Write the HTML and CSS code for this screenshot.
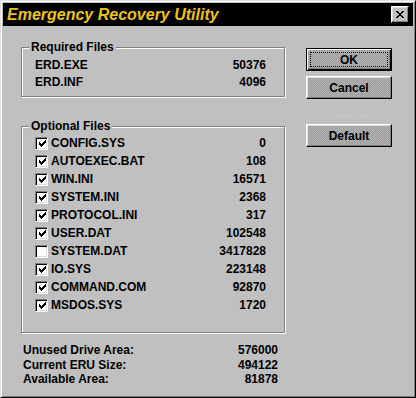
FILE: index.html
```html
<!DOCTYPE html>
<html lang="en">
  <head>
    <meta charset="UTF-8" />
    <title>Emergency Recovery Utility</title>
    <link rel="stylesheet" href="styles.css">
  </head>
  <body>
    <div class="window">
      <div class="titlebar">
        <span class="title">Emergency Recovery Utility</span>
        <button class="close-btn">
          <svg width="8" height="7" viewBox="0 0 8 7" shape-rendering="crispEdges">
            <path d="M0 0h2v1h-2zM6 0h2v1h-2zM1 1h2v1h-2zM5 1h2v1h-2zM2 2h4v1h-4zM3 3h2v1h-2zM2 4h4v1h-4zM1 5h2v1h-2zM5 5h2v1h-2zM0 6h2v1h-2zM6 6h2v1h-2z" fill="#000"/>
          </svg>
        </button>
      </div>
      <div class="dialog">
        <div class="left-col">
          <fieldset class="group group-required">
            <legend>Required Files</legend>
            <div class="file-row"><span class="name">ERD.EXE</span><span class="size">50376</span></div>
            <div class="file-row"><span class="name">ERD.INF</span><span class="size">4096</span></div>
          </fieldset>
          <fieldset class="group group-optional">
            <legend>Optional Files</legend>
            <div class="file-row"><span class="check"><svg class="tick" width="7" height="7" viewBox="0 0 7 7" shape-rendering="crispEdges"><path d="M6 0h1v1h-1zM5 1h2v1h-2zM0 2h1v1h-1zM4 2h3v1h-3zM0 3h2v1h-2zM3 3h3v1h-3zM0 4h5v1h-5zM1 5h3v1h-3zM2 6h1v1h-1z"/></svg></span><span class="name">CONFIG.SYS</span><span class="size">0</span></div>
            <div class="file-row"><span class="check"><svg class="tick" width="7" height="7" viewBox="0 0 7 7" shape-rendering="crispEdges"><path d="M6 0h1v1h-1zM5 1h2v1h-2zM0 2h1v1h-1zM4 2h3v1h-3zM0 3h2v1h-2zM3 3h3v1h-3zM0 4h5v1h-5zM1 5h3v1h-3zM2 6h1v1h-1z"/></svg></span><span class="name">AUTOEXEC.BAT</span><span class="size">108</span></div>
            <div class="file-row"><span class="check"><svg class="tick" width="7" height="7" viewBox="0 0 7 7" shape-rendering="crispEdges"><path d="M6 0h1v1h-1zM5 1h2v1h-2zM0 2h1v1h-1zM4 2h3v1h-3zM0 3h2v1h-2zM3 3h3v1h-3zM0 4h5v1h-5zM1 5h3v1h-3zM2 6h1v1h-1z"/></svg></span><span class="name">WIN.INI</span><span class="size">16571</span></div>
            <div class="file-row"><span class="check"><svg class="tick" width="7" height="7" viewBox="0 0 7 7" shape-rendering="crispEdges"><path d="M6 0h1v1h-1zM5 1h2v1h-2zM0 2h1v1h-1zM4 2h3v1h-3zM0 3h2v1h-2zM3 3h3v1h-3zM0 4h5v1h-5zM1 5h3v1h-3zM2 6h1v1h-1z"/></svg></span><span class="name">SYSTEM.INI</span><span class="size">2368</span></div>
            <div class="file-row"><span class="check"><svg class="tick" width="7" height="7" viewBox="0 0 7 7" shape-rendering="crispEdges"><path d="M6 0h1v1h-1zM5 1h2v1h-2zM0 2h1v1h-1zM4 2h3v1h-3zM0 3h2v1h-2zM3 3h3v1h-3zM0 4h5v1h-5zM1 5h3v1h-3zM2 6h1v1h-1z"/></svg></span><span class="name">PROTOCOL.INI</span><span class="size">317</span></div>
            <div class="file-row"><span class="check"><svg class="tick" width="7" height="7" viewBox="0 0 7 7" shape-rendering="crispEdges"><path d="M6 0h1v1h-1zM5 1h2v1h-2zM0 2h1v1h-1zM4 2h3v1h-3zM0 3h2v1h-2zM3 3h3v1h-3zM0 4h5v1h-5zM1 5h3v1h-3zM2 6h1v1h-1z"/></svg></span><span class="name">USER.DAT</span><span class="size">102548</span></div>
            <div class="file-row"><span class="check"></span><span class="name">SYSTEM.DAT</span><span class="size">3417828</span></div>
            <div class="file-row"><span class="check"><svg class="tick" width="7" height="7" viewBox="0 0 7 7" shape-rendering="crispEdges"><path d="M6 0h1v1h-1zM5 1h2v1h-2zM0 2h1v1h-1zM4 2h3v1h-3zM0 3h2v1h-2zM3 3h3v1h-3zM0 4h5v1h-5zM1 5h3v1h-3zM2 6h1v1h-1z"/></svg></span><span class="name">IO.SYS</span><span class="size">223148</span></div>
            <div class="file-row"><span class="check"><svg class="tick" width="7" height="7" viewBox="0 0 7 7" shape-rendering="crispEdges"><path d="M6 0h1v1h-1zM5 1h2v1h-2zM0 2h1v1h-1zM4 2h3v1h-3zM0 3h2v1h-2zM3 3h3v1h-3zM0 4h5v1h-5zM1 5h3v1h-3zM2 6h1v1h-1z"/></svg></span><span class="name">COMMAND.COM</span><span class="size">92870</span></div>
            <div class="file-row"><span class="check"><svg class="tick" width="7" height="7" viewBox="0 0 7 7" shape-rendering="crispEdges"><path d="M6 0h1v1h-1zM5 1h2v1h-2zM0 2h1v1h-1zM4 2h3v1h-3zM0 3h2v1h-2zM3 3h3v1h-3zM0 4h5v1h-5zM1 5h3v1h-3zM2 6h1v1h-1z"/></svg></span><span class="name">MSDOS.SYS</span><span class="size">1720</span></div>
          </fieldset>
          <div class="stats">
            <div class="stat-row"><span>Unused Drive Area:</span><span>576000</span></div>
            <div class="stat-row"><span>Current ERU Size:</span><span>494122</span></div>
            <div class="stat-row"><span>Available Area:</span><span>81878</span></div>
          </div>
        </div>
        <div class="buttons">
          <button class="btn btn-default"><span class="focus">OK</span></button>
          <button class="btn">Cancel</button>
          <div class="separator"></div>
          <button class="btn">Default</button>
        </div>
      </div>
    </div>
  </body>
</html>
```

FILE: styles.css
```css
body {
  margin: 0;
  font-family: "Liberation Sans", Arial, sans-serif;
  font-size: 12px;
  font-weight: bold;
  color: #000;
  background-color: #c0c0c0;
}
.window {
  box-sizing: border-box;
  width: 416px;
  height: 398px;
  padding: 2px;
  background-color: #c0c0c0;
  border: 1px solid;
  border-color: #dfdfdf #000 #000 #dfdfdf;
  box-shadow: inset 1px 1px #fff, inset -1px -1px #808080;
}
.titlebar {
  display: flex;
  align-items: center;
  justify-content: space-between;
  height: 23px;
  padding: 0 4px;
  background-color: #000;
}
.title {
  color: #ecc21c;
  font-size: 16px;
  font-style: italic;
  font-weight: bold;
}
.close-btn {
  box-sizing: border-box;
  display: flex;
  align-items: center;
  justify-content: center;
  width: 18px;
  height: 17px;
  padding: 0;
  background-color: #c0c0c0;
  border: 1px solid;
  border-color: #fff #000 #000 #fff;
  box-shadow: inset -1px -1px #808080, inset 1px 1px #dfdfdf;
}
.dialog {
  display: flex;
  padding-left: 18px;
}
.left-col {
  width: 264px;
  padding-top: 14px;
}
.group {
  margin: 0;
  padding: 0 18px 0 7px;
  border: 1px solid #808080;
  box-shadow: 1px 1px 0 #fff, inset 1px 1px 0 #fff;
}
.group legend {
  padding: 0 2px;
  line-height: 14px;
  background-color: #c0c0c0;
}
.group-required {
  padding-top: 2px;
  padding-bottom: 6px;
}
.group-optional {
  margin-top: 22px;
  padding-top: 1px;
  padding-bottom: 18px;
}
.file-row {
  display: flex;
  align-items: center;
  padding-left: 6px;
}
.group-required .file-row {
  height: 17px;
}
.group-optional .file-row {
  height: 18px;
}
.file-row .size {
  margin-left: auto;
}
.check {
  box-sizing: border-box;
  display: flex;
  align-items: center;
  justify-content: center;
  width: 13px;
  height: 13px;
  margin-right: 3px;
  background-color: #fff;
  border: 1px solid;
  border-color: #808080 #fff #fff #808080;
  box-shadow: inset 1px 1px #000, inset -1px -1px #dfdfdf;
}
.tick {
  margin: 1px 0 0 1px;
  fill: #000;
}
.stats {
  margin-top: 10px;
  padding: 0 7px 0 2px;
}
.stat-row {
  display: flex;
  justify-content: space-between;
  line-height: 14.5px;
}
.buttons {
  display: flex;
  flex-direction: column;
  gap: 5px;
  margin-left: 21px;
  padding-top: 22px;
}
.btn {
  box-sizing: border-box;
  width: 86px;
  height: 23px;
  padding: 0;
  font-family: inherit;
  font-size: 12px;
  font-weight: bold;
  color: #000;
  background: repeating-conic-gradient(#9c9c9c 0 25%, #b4b4b4 0 50%) 0 0 / 2px 2px;
  border: 1px solid;
  border-color: #fff #000 #000 #fff;
  box-shadow: inset -1px -1px #808080, inset 1px 1px #dfdfdf;
}
.btn-default {
  padding: 3px;
  border: 1px solid #000;
  box-shadow: inset 1px 1px #fff, inset -1px -1px #000, inset -2px -2px #808080;
}
.btn-default .focus {
  box-sizing: border-box;
  display: flex;
  align-items: center;
  justify-content: center;
  height: 100%;
  border: 1px dotted #000;
}
.separator {
  width: 44px;
  height: 1px;
  margin: 12px 0 2px 21px;
  background: repeating-linear-gradient(90deg, #d4d4d4 0 1px, transparent 1px 3px);
}
```
